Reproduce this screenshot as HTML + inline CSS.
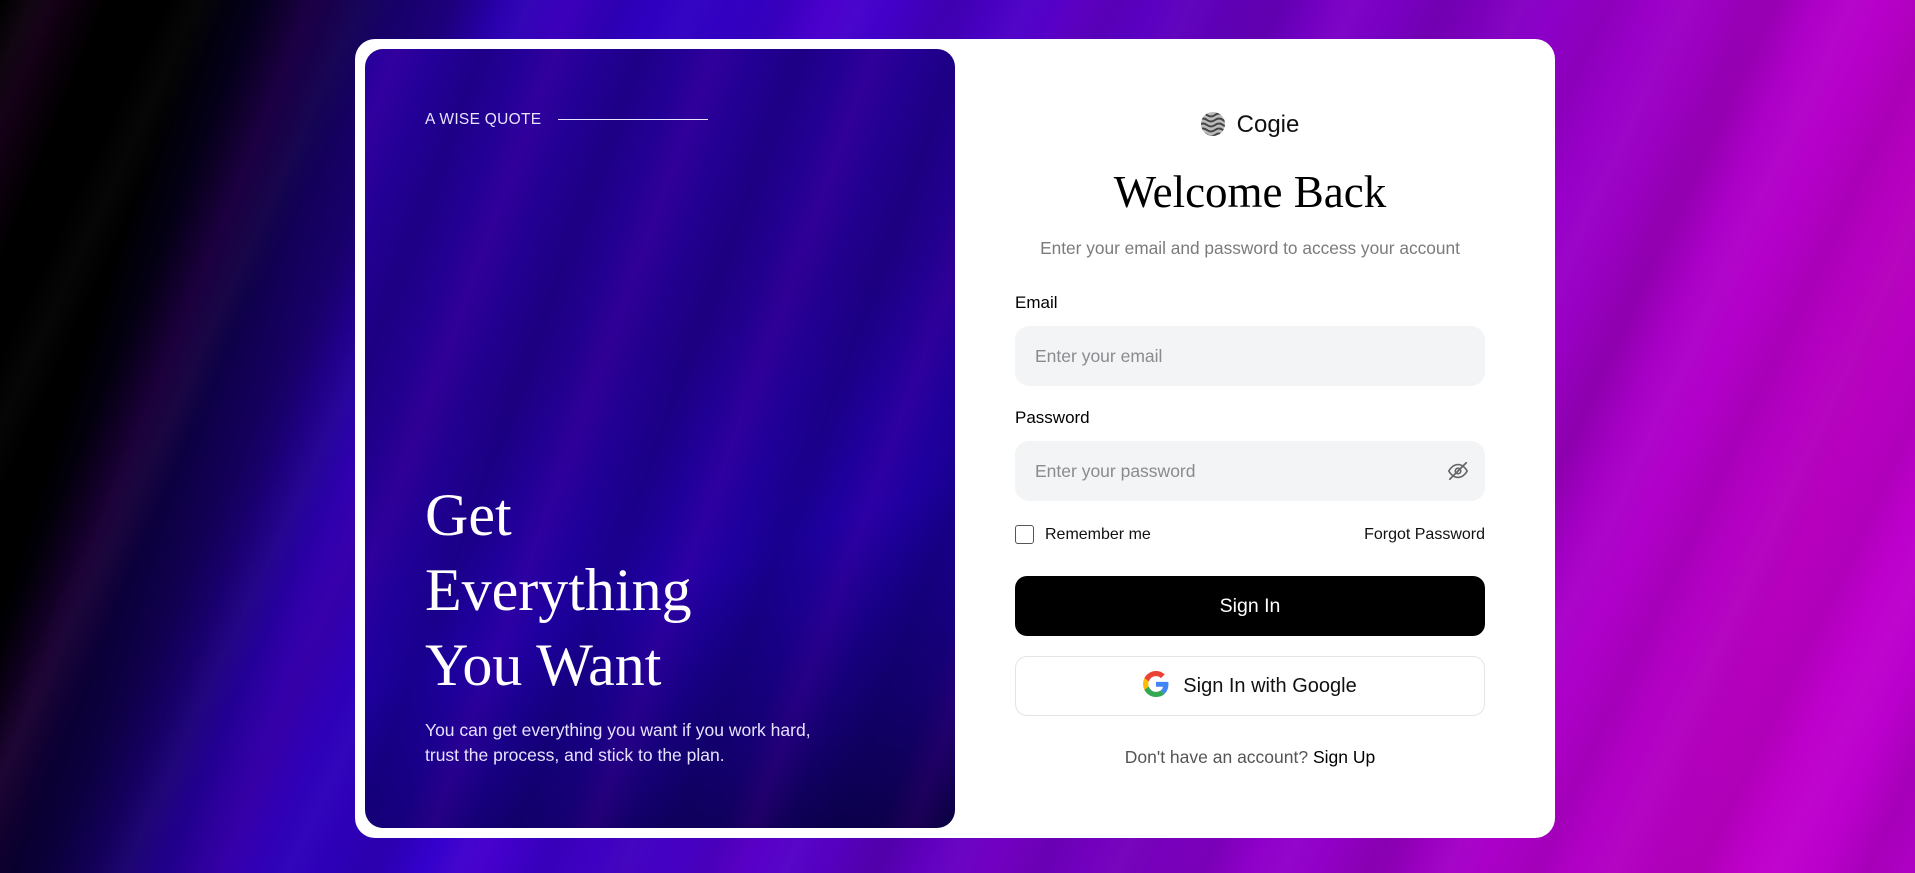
<!DOCTYPE html>
<html><head><meta charset="utf-8"><style>
*{box-sizing:border-box;margin:0;padding:0}
html,body{width:1915px;height:873px;overflow:hidden}
body{font-family:"Liberation Sans",Arial,sans-serif;position:relative;
background:
repeating-linear-gradient(115deg,rgba(255,255,255,0) 0px,rgba(255,255,255,.025) 30px,rgba(0,0,0,0) 60px,rgba(0,0,0,.08) 110px,rgba(255,255,255,0) 150px),
repeating-linear-gradient(112deg,rgba(200,0,200,0) 0px,rgba(200,0,220,.1) 50px,rgba(0,0,0,0) 100px,rgba(0,0,0,.06) 180px,rgba(0,0,0,0) 240px),
linear-gradient(108deg,#000 0%,#000 9%,#0c0040 15%,#2a00b0 23%,#3300cc 32%,#4a00c8 45%,#6a00c0 58%,#8a00c8 70%,#a800c8 80%,#c000c8 90%,#b800d0 100%);}
.card{position:absolute;left:355px;top:39px;width:1200px;height:799px;background:#fff;border-radius:20px}
.left{position:absolute;left:10px;top:10px;width:590px;height:779px;border-radius:18px;overflow:hidden;
background:
repeating-linear-gradient(110deg,rgba(255,255,255,0) 0px,rgba(150,0,200,.12) 30px,rgba(0,0,0,0) 65px,rgba(0,0,60,.18) 110px,rgba(0,0,0,0) 150px),
linear-gradient(160deg,#24009a 0%,#22008e 40%,#1e00a0 65%,#140070 85%,#0a0040 100%);}
.q{position:absolute;left:60px;top:62px;color:#e8e4ff;font-size:15.5px;letter-spacing:.3px}
.qline{position:absolute;left:193px;top:70px;width:150px;height:1px;background:#e8e4ff}
.big{position:absolute;left:60px;top:429px;color:#fff;font-family:"Liberation Serif",serif;font-size:60px;line-height:75px}
.p{position:absolute;left:60px;top:669px;color:#e6e2ff;font-size:17.5px;line-height:25px}
.right{position:absolute;left:660px;top:0;width:470px}
.logo{position:absolute;top:72px;left:0;width:470px;text-align:center;font-size:24px;color:#111;line-height:28px}
.logo svg{vertical-align:-4px;margin-right:12px}
h1{position:absolute;top:127px;width:470px;text-align:center;font-family:"Liberation Serif",serif;font-weight:normal;font-size:45px;color:#000}
.sub{position:absolute;top:199px;width:470px;text-align:center;font-size:17.3px;color:#7b7b7b}
.lbl{position:absolute;left:0;font-size:17px;color:#000}
.inp{position:absolute;left:0;width:470px;height:60px;background:#f3f4f6;border-radius:14px;padding-left:20px;line-height:60px;font-size:17.5px;color:#8a8a8f}
.chk{position:absolute;left:0;top:486px;width:19px;height:19px;border:1.5px solid #555;border-radius:3px;background:#fff}
.rem{position:absolute;left:30px;top:487px;font-size:16px;color:#111}
.fp{position:absolute;right:0;top:487px;font-size:16px;color:#111}
.btn{position:absolute;left:0;top:537px;width:470px;height:60px;background:#000;border-radius:12px;color:#fff;text-align:center;line-height:60px;font-size:19.5px}
.gbtn{position:absolute;left:0;top:617px;width:470px;height:60px;background:#fff;border:1px solid #e4e4e4;border-radius:12px;text-align:center;line-height:58px;font-size:20px;color:#111}
.gbtn svg{vertical-align:-5px;margin-right:14px}
.su{position:absolute;top:708px;width:470px;text-align:center;font-size:17.5px;color:#555}
.su b{font-weight:normal;color:#000}
</style></head><body>
<div class="card">
 <div class="left">
  <div class="q">A WISE QUOTE</div><div class="qline"></div>
  <div class="big">Get<br>Everything<br>You Want</div>
  <div class="p">You can get everything you want if you work hard,<br>trust the process, and stick to the plan.</div>
 </div>
 <div class="right">
  <div class="logo"><svg width="24" height="24" viewBox="0 0 24 24"><defs><clipPath id="c"><circle cx="12" cy="12" r="12"/></clipPath></defs><g clip-path="url(#c)"><rect width="24" height="24" fill="#bbb"/><g fill="none" stroke="#444" stroke-width="2"><path d="M-2 3q4-3 8 0t8 0t8 0t8 0"/><path d="M-2 8q4-3 8 0t8 0t8 0t8 0"/><path d="M-2 13q4-3 8 0t8 0t8 0t8 0"/><path d="M-2 18q4-3 8 0t8 0t8 0t8 0"/><path d="M-2 23q4-3 8 0t8 0t8 0t8 0"/></g></g></svg>Cogie</div>
  <h1>Welcome Back</h1>
  <div class="sub">Enter your email and password to access your account</div>
  <div class="lbl" style="top:254px">Email</div>
  <div class="inp" style="top:287px">Enter your email</div>
  <div class="lbl" style="top:369px">Password</div>
  <div class="inp" style="top:402px">Enter your password
   <svg style="position:absolute;right:16px;top:19px" width="22" height="22" viewBox="0 0 24 24" fill="none" stroke="#666" stroke-width="1.8" stroke-linecap="round"><path d="M2 12s3.5-7 10-7 10 7 10 7-3.5 7-10 7S2 12 2 12z"/><circle cx="12" cy="12" r="3"/><path d="M3 21L21 3"/></svg></div>
  <div class="chk"></div><div class="rem">Remember me</div>
  <div class="fp">Forgot Password</div>
  <div class="btn">Sign In</div>
  <div class="gbtn"><svg width="26" height="26" viewBox="0 0 48 48"><path fill="#EA4335" d="M24 9.5c3.54 0 6.71 1.220 9.21 3.6l6.85-6.85C35.9 2.38 30.47 0 24 0 14.62 0 6.51 5.38 2.56 13.22l7.98 6.19C12.430 13.72 17.74 9.5 24 9.5z"/><path fill="#4285F4" d="M46.98 24.55c0-1.57-.15-3.090-.38-4.55H24v9.02h12.94c-.58 2.96-2.26 5.48-4.78 7.18l7.73 6c4.510-4.18 7.09-10.36 7.09-17.65z"/><path fill="#FBBC05" d="M10.53 28.59c-.48-1.450-.76-2.99-.76-4.59s.27-3.14.76-4.59l-7.98-6.19C.92 16.46 0 20.12 0 24c0 3.88.92 7.54 2.56 10.78l7.97-6.19z"/><path fill="#34A853" d="M24 48c6.48 0 11.93-2.13 15.89-5.81l-7.73-6c-2.15 1.45-4.92 2.3-8.16 2.3-6.26 0-11.57-4.22-13.47-9.91l-7.98 6.19C6.51 42.62 14.62 48 24 48z"/></svg>Sign In with Google</div>
  <div class="su">Don't have an account? <b>Sign Up</b></div>
 </div>
</div>
</body></html>
